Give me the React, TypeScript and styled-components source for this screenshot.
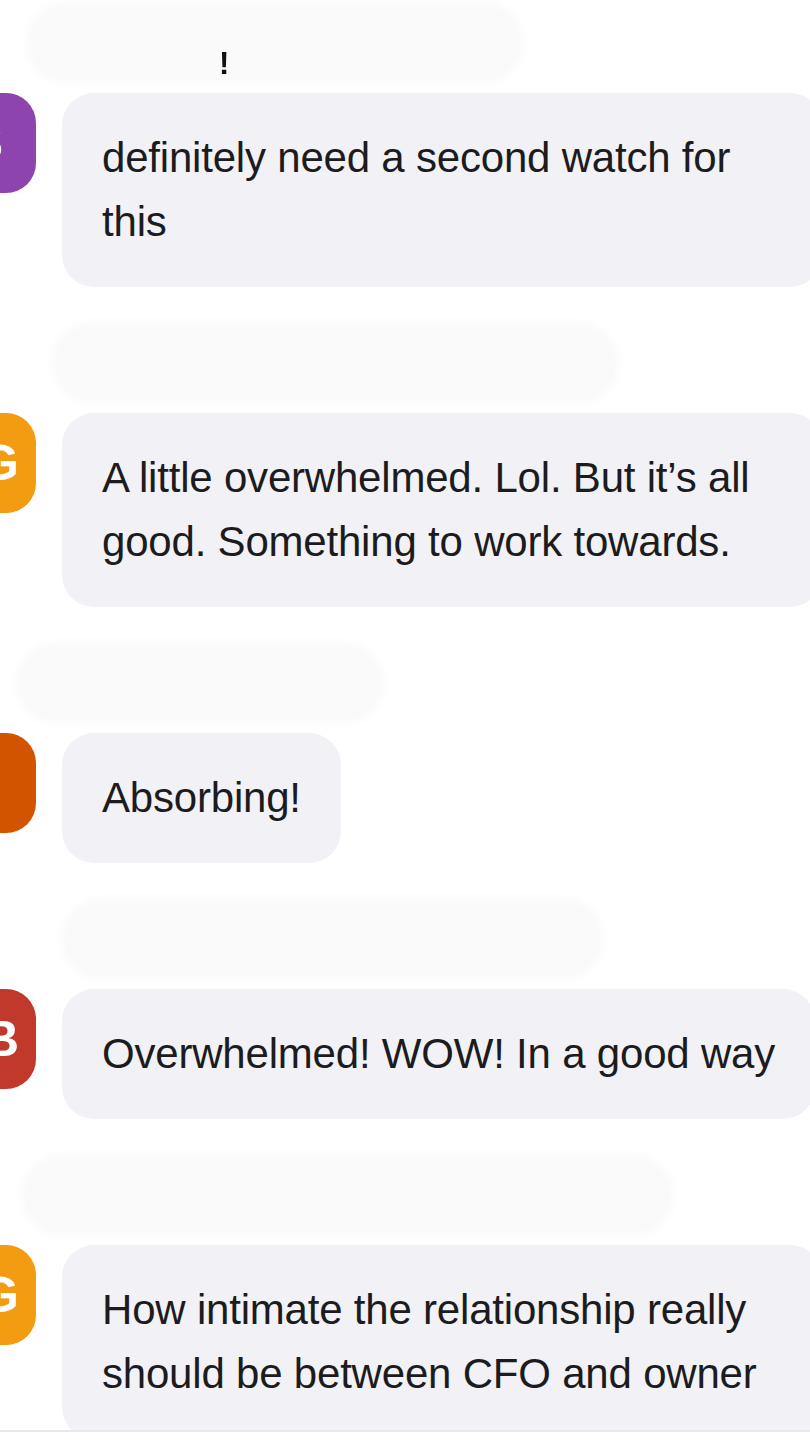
import React from "react";
import styled, { createGlobalStyle } from "styled-components";

const GlobalStyle = createGlobalStyle`
  html, body {
    margin: 0;
    padding: 0;
    background: #ffffff;
    overflow: hidden;
  }
  body {
    font-family: "Liberation Sans", Arial, sans-serif;
    -webkit-font-smoothing: antialiased;
  }
`;

const Screen = styled.div`
  width: 810px;
  height: 1440px;
  display: flex;
  flex-direction: column;
  overflow: hidden;
  background: #ffffff;
`;

const Feed = styled.div`
  flex: 1;
  min-height: 0;
  overflow: hidden;
  display: flex;
  flex-direction: column;
  gap: 39px;
  padding-top: 6px;
`;

const Group = styled.section`
  display: flex;
  flex-direction: column;
  gap: 13px;
`;

// sender / timestamp line, blurred out in the capture
const BlurredMeta = styled.div<{ $indent: number; $width: number }>`
  height: 74px;
  width: ${({ $width }) => $width}px;
  margin-left: ${({ $indent }) => $indent}px;
  border-radius: 37px;
  background: #fafafa;
  box-shadow: 0 0 8px 5px #fbfbfb;
  display: flex;
  align-items: flex-end;
  box-sizing: border-box;
  padding: 0 0 1px 189px;
`;

const Caret = styled.span`
  font-size: 31px;
  line-height: 1;
  font-weight: 700;
  color: #111;
  filter: blur(0.7px);
`;

const Row = styled.div`
  display: flex;
  align-items: flex-start;
  gap: 26px;
`;

const Avatar = styled.div<{ $color: string; $inset: number }>`
  flex-shrink: 0;
  width: 74px;
  height: 100px;
  margin-left: -38px;
  border-radius: 30px;
  background: ${({ $color }) => $color};
  display: flex;
  align-items: center;
  justify-content: flex-end;
  box-sizing: border-box;
  padding-right: ${({ $inset }) => $inset}px;
  color: #ffffff;
  font-size: 50px;
  font-weight: 700;
  line-height: 1;
`;

const Bubble = styled.div`
  flex-shrink: 0;
  max-width: 680px;
  padding: 33px 40px;
  border-radius: 32px;
  background: #f2f1f6;
  color: #1c1c1e;
  font-size: 42px;
  line-height: 64px;
  letter-spacing: -0.2px;
`;

const Footer = styled.footer`
  height: 8px;
  border-top: 2px solid #e7e7ec;
  background: #ffffff;
`;

type Message = {
  initial: string;
  color: string;
  inset: number;
  text: string;
  meta: [number, number];
};

const messages: Message[] = [
  {
    initial: "S",
    color: "#8e44ad",
    inset: 33,
    text: "definitely need a second watch for this",
    meta: [30, 490],
  },
  {
    initial: "G",
    color: "#f39c12",
    inset: 17,
    text: "A little overwhelmed. Lol. But it\u2019s all good. Something to work towards.",
    meta: [55, 560],
  },
  {
    initial: "M",
    color: "#d35400",
    inset: 44,
    text: "Absorbing!",
    meta: [20, 360],
  },
  {
    initial: "B",
    color: "#c0392b",
    inset: 17,
    text: "Overwhelmed! WOW! In a good way",
    meta: [65, 535],
  },
  {
    initial: "G",
    color: "#f39c12",
    inset: 17,
    text: "How intimate the relationship really should be between CFO and owner",
    meta: [25, 645],
  },
];

export default function App() {
  return (
    <>
      <GlobalStyle />
      <Screen>
        <Feed>
          {messages.map((m, i) => (
            <Group key={i}>
              <BlurredMeta $indent={m.meta[0]} $width={m.meta[1]}>
                {i === 0 && <Caret>!</Caret>}
              </BlurredMeta>
              <Row>
                <Avatar $color={m.color} $inset={m.inset}>
                  {m.initial}
                </Avatar>
                <Bubble>{m.text}</Bubble>
              </Row>
            </Group>
          ))}
        </Feed>
        <Footer />
      </Screen>
    </>
  );
}
